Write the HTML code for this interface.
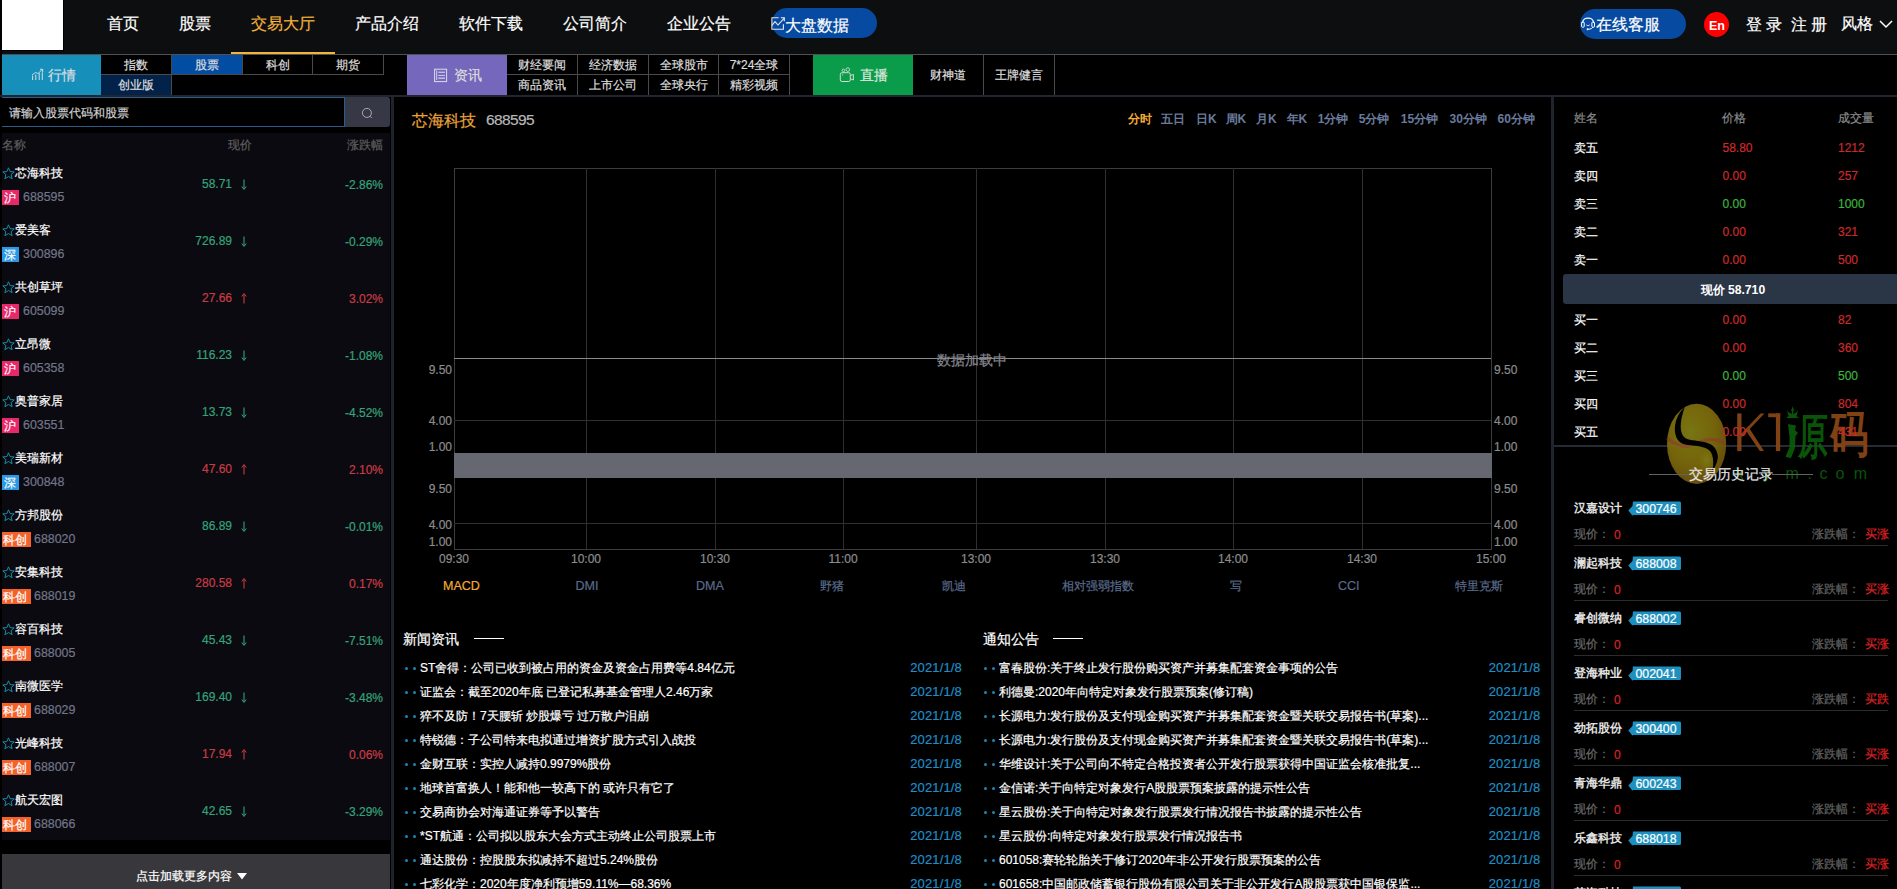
<!DOCTYPE html>
<html><head><meta charset="utf-8"><title>交易大厅</title>
<style>
html,body{margin:0;padding:0;}
body{width:1897px;height:889px;overflow:hidden;background:#000;position:relative;font-family:"Liberation Sans",sans-serif;}
.t{position:absolute;white-space:nowrap;-webkit-text-stroke-width:0.2px;}
.r{position:absolute;}
svg{position:absolute;}
</style></head><body>

<div class="r" style="left:2px;top:0px;width:1895px;height:54px;background:#0d0e10;"></div>
<div class="r" style="left:2px;top:54px;width:1895px;height:1px;background:#505050;"></div>
<div class="r" style="left:2px;top:0px;width:62px;height:51px;background:#000;"></div>
<div class="r" style="left:2px;top:0px;width:61px;height:50px;background:#fff;"></div>
<div class="t " style="left:107.1px;top:16px;font-size:16px;line-height:16px;color:#fff;">首页</div>
<div class="t " style="left:178.5px;top:16px;font-size:16px;line-height:16px;color:#fff;">股票</div>
<div class="t " style="left:250.5px;top:16px;font-size:16px;line-height:16px;color:#f3b33d;">交易大厅</div>
<div class="t " style="left:354.5px;top:16px;font-size:16px;line-height:16px;color:#fff;">产品介绍</div>
<div class="t " style="left:458.5px;top:16px;font-size:16px;line-height:16px;color:#fff;">软件下载</div>
<div class="t " style="left:562.5px;top:16px;font-size:16px;line-height:16px;color:#fff;">公司简介</div>
<div class="t " style="left:666.5px;top:16px;font-size:16px;line-height:16px;color:#fff;">企业公告</div>
<div class="r" style="left:231px;top:52px;width:104px;height:2px;background:#f3b33d;"></div>
<div class="r" style="left:772px;top:8px;width:105px;height:30px;background:#064aa2;border-radius:15px;"></div>
<svg style="left:766px;top:10px" width="20" height="24" viewBox="766 10 20 24"><path d="M778.6 17.7 H771.9 V29.2 H783.4 V24.2" fill="none" stroke="#e6e9f2" stroke-width="1.1"/><path d="M771.9 25.5 L775 21.6 L778 25 L784.3 18.2" fill="none" stroke="#e6e9f2" stroke-width="1.1"/><path d="M780.8 17.7 H784.3 V21.3" fill="none" stroke="#e6e9f2" stroke-width="1.1"/></svg>
<div class="t " style="left:785px;top:18px;font-size:16px;line-height:16px;color:#fff;">大盘数据</div>
<div class="r" style="left:1580px;top:9px;width:106px;height:30px;background:#064aa2;border-radius:15px;"></div>
<svg style="left:1575px;top:10px" width="24" height="24" viewBox="1575 10 24 24"><path d="M1582.6 23 C1582.6 16.5 1593.6 16.5 1593.6 23" fill="none" stroke="#fff" stroke-width="1.2"/><rect x="1581.6" y="22" width="2.6" height="5.2" rx="0.8" fill="none" stroke="#fff" stroke-width="1"/><rect x="1591.9" y="22" width="2.6" height="5.2" rx="0.8" fill="none" stroke="#fff" stroke-width="1"/><path d="M1586.3 24.8 Q1588 27 1589.8 24.8" fill="none" stroke="#eee" stroke-width="0.9"/><path d="M1593 27 Q1592 29.3 1588.2 29.3" fill="none" stroke="#fff" stroke-width="1"/><circle cx="1587.6" cy="29.2" r="1" fill="#fff"/></svg>
<div class="t " style="left:1596px;top:17px;font-size:16px;line-height:16px;color:#fff;">在线客服</div>
<div class="r" style="left:1704px;top:12px;width:25px;height:25px;background:#f00;border-radius:50%;"></div>
<div class="t " style="left:1709px;top:19.5px;font-size:12.5px;line-height:12.5px;color:#fff;font-weight:bold;-webkit-text-stroke-width:0;">En</div>
<div class="t " style="left:1746px;top:17px;font-size:16px;line-height:16px;color:#fff;">登 录</div>
<div class="t " style="left:1790.5px;top:17px;font-size:16px;line-height:16px;color:#fff;">注 册</div>
<div class="t " style="left:1841px;top:16px;font-size:16px;line-height:16px;color:#fff;">风格</div>
<svg style="left:1879px;top:19px" width="14" height="10" viewBox="0 0 14 10"><path d="M1 2 L7 8 L13 2" fill="none" stroke="#fff" stroke-width="1.5"/></svg>
<div class="r" style="left:0px;top:55px;width:1897px;height:40px;background:#000;"></div>
<div class="r" style="left:2px;top:55px;width:99px;height:40px;background:#1690bb;"></div>
<svg style="left:25px;top:62px" width="22" height="22" viewBox="25 62 22 22"><path d="M32.6 80 V75.6 M35.8 80 V74.5 M39.2 80 V73 M42.3 80 V72.3" stroke="#d4dde4" stroke-width="1" fill="none"/><path d="M32 75 L35.5 72.5 L38 73.5 L42.6 69.3" stroke="#d4dde4" stroke-width="0.9" fill="none"/><path d="M40 69.3 H42.7 V72" stroke="#d4dde4" stroke-width="1" fill="none"/></svg>
<div class="t " style="left:47.5px;top:68px;font-size:14px;line-height:14px;color:#d8dde2;">行情</div>
<div class="r" style="left:101px;top:55px;width:71px;height:20px;background:#000;box-sizing:border-box;border-right:1px solid #4a4a4a;border-bottom:1px solid #4a4a4a;"></div>
<div class="t" style="left:100.5px;width:71px;text-align:center;top:59px;font-size:12px;line-height:12px;color:#ddd;">指数</div>
<div class="r" style="left:172px;top:55px;width:71px;height:20px;background:#024ca2;box-sizing:border-box;border-right:1px solid #4a4a4a;border-bottom:1px solid #4a4a4a;"></div>
<div class="t" style="left:171.5px;width:71px;text-align:center;top:59px;font-size:12px;line-height:12px;color:#ddd;">股票</div>
<div class="r" style="left:243px;top:55px;width:70px;height:20px;background:#000;box-sizing:border-box;border-right:1px solid #4a4a4a;border-bottom:1px solid #4a4a4a;"></div>
<div class="t" style="left:242.5px;width:70px;text-align:center;top:59px;font-size:12px;line-height:12px;color:#ddd;">科创</div>
<div class="r" style="left:313px;top:55px;width:71px;height:20px;background:#000;box-sizing:border-box;border-right:1px solid #4a4a4a;border-bottom:1px solid #4a4a4a;"></div>
<div class="t" style="left:312.5px;width:71px;text-align:center;top:59px;font-size:12px;line-height:12px;color:#ddd;">期货</div>
<div class="r" style="left:101px;top:75px;width:71px;height:20px;background:#02224a;box-sizing:border-box;border-right:1px solid #4a4a4a;"></div>
<div class="t" style="left:100.5px;width:71px;text-align:center;top:79px;font-size:12px;line-height:12px;color:#ddd;">创业版</div>
<div class="r" style="left:407px;top:55px;width:100px;height:40px;background:#7567bb;"></div>
<svg style="left:425px;top:62px" width="26" height="24" viewBox="425 62 26 24"><rect x="434.6" y="69.2" width="12" height="12.4" fill="none" stroke="#dcdcf0" stroke-width="1"/><path d="M436.7 70.5 V80" stroke="#dcdcf0" stroke-width="0.9"/><path d="M438.3 72.3 H445" stroke="#c8c4e6" stroke-width="1.3"/><path d="M438.3 75.4 H445" stroke="#dcdcf0" stroke-width="0.9"/><path d="M438.3 78.2 H445" stroke="#c8c4e6" stroke-width="1.4"/></svg>
<div class="t " style="left:453.5px;top:68px;font-size:14px;line-height:14px;color:#dedede;">资讯</div>
<div class="r" style="left:507px;top:55px;width:71px;height:20px;background:#000;box-sizing:border-box;border-right:1px solid #4a4a4a;border-bottom:1px solid #4a4a4a;"></div>
<div class="t" style="left:506.5px;width:71px;text-align:center;top:59px;font-size:12px;line-height:12px;color:#ddd;">财经要闻</div>
<div class="r" style="left:507px;top:75px;width:71px;height:20px;background:#000;box-sizing:border-box;border-right:1px solid #4a4a4a;"></div>
<div class="t" style="left:506.5px;width:71px;text-align:center;top:79px;font-size:12px;line-height:12px;color:#ddd;">商品资讯</div>
<div class="r" style="left:578px;top:55px;width:71px;height:20px;background:#000;box-sizing:border-box;border-right:1px solid #4a4a4a;border-bottom:1px solid #4a4a4a;"></div>
<div class="t" style="left:577.5px;width:71px;text-align:center;top:59px;font-size:12px;line-height:12px;color:#ddd;">经济数据</div>
<div class="r" style="left:578px;top:75px;width:71px;height:20px;background:#000;box-sizing:border-box;border-right:1px solid #4a4a4a;"></div>
<div class="t" style="left:577.5px;width:71px;text-align:center;top:79px;font-size:12px;line-height:12px;color:#ddd;">上市公司</div>
<div class="r" style="left:649px;top:55px;width:70px;height:20px;background:#000;box-sizing:border-box;border-right:1px solid #4a4a4a;border-bottom:1px solid #4a4a4a;"></div>
<div class="t" style="left:648.5px;width:70px;text-align:center;top:59px;font-size:12px;line-height:12px;color:#ddd;">全球股市</div>
<div class="r" style="left:649px;top:75px;width:70px;height:20px;background:#000;box-sizing:border-box;border-right:1px solid #4a4a4a;"></div>
<div class="t" style="left:648.5px;width:70px;text-align:center;top:79px;font-size:12px;line-height:12px;color:#ddd;">全球央行</div>
<div class="r" style="left:719px;top:55px;width:71px;height:20px;background:#000;box-sizing:border-box;border-right:1px solid #4a4a4a;border-bottom:1px solid #4a4a4a;"></div>
<div class="t" style="left:718.5px;width:71px;text-align:center;top:59px;font-size:12px;line-height:12px;color:#ddd;">7*24全球</div>
<div class="r" style="left:719px;top:75px;width:71px;height:20px;background:#000;box-sizing:border-box;border-right:1px solid #4a4a4a;"></div>
<div class="t" style="left:718.5px;width:71px;text-align:center;top:79px;font-size:12px;line-height:12px;color:#ddd;">精彩视频</div>
<div class="r" style="left:813px;top:55px;width:100px;height:40px;background:#0b9c4b;"></div>
<svg style="left:835px;top:64px" width="24" height="22" viewBox="835 64 24 22"><rect x="840.3" y="72.7" width="10" height="8.8" rx="1.6" fill="none" stroke="#d2dcd2" stroke-width="1"/><path d="M850.3 75.6 L853.4 74.4 V80 L850.3 78.8" fill="none" stroke="#d2dcd2" stroke-width="1"/><circle cx="843.4" cy="70.4" r="1.3" fill="none" stroke="#d2dcd2" stroke-width="0.9"/><circle cx="847.8" cy="69.6" r="1.8" fill="none" stroke="#d2dcd2" stroke-width="0.9"/><circle cx="842.6" cy="74.8" r="0.6" fill="#d2dcd2"/></svg>
<div class="t " style="left:859.5px;top:68px;font-size:14px;line-height:14px;color:#dde6de;">直播</div>
<div class="r" style="left:913px;top:55px;width:71px;height:40px;background:#000;box-sizing:border-box;border-right:1px solid #4a4a4a;"></div>
<div class="t" style="left:912.5px;width:71px;text-align:center;top:69px;font-size:12px;line-height:12px;color:#ddd;">财神道</div>
<div class="r" style="left:984px;top:55px;width:71px;height:40px;background:#000;box-sizing:border-box;border-right:1px solid #4a4a4a;"></div>
<div class="t" style="left:983.5px;width:71px;text-align:center;top:69px;font-size:12px;line-height:12px;color:#ddd;">王牌健言</div>
<div class="r" style="left:0px;top:95px;width:1897px;height:2px;background:#20252f;"></div>
<div class="r" style="left:2px;top:97px;width:343px;height:30px;box-sizing:border-box;border:1px solid #2b5d8a;border-left:none;background:#000"></div>
<div class="t " style="left:9px;top:107px;font-size:12px;line-height:12px;color:#d0d0d0;">请输入股票代码和股票</div>
<div class="r" style="left:345px;top:97px;width:45px;height:30px;background:#363845;border-radius:0 3px 3px 0;"></div>
<svg style="left:358px;top:104px" width="18" height="18" viewBox="358 104 18 18"><circle cx="366.9" cy="112.9" r="4.5" fill="none" stroke="#b4b6bc" stroke-width="0.9"/><path d="M370 116.2 L371.8 118" stroke="#b4b6bc" stroke-width="0.9"/></svg>
<div class="r" style="left:391px;top:97px;width:3px;height:792px;background:#1e232c;"></div>
<div class="r" style="left:2px;top:133px;width:388px;height:707px;background:#0b0a10;"></div>
<div class="t " style="left:2px;top:139px;font-size:12px;line-height:12px;color:#5e5e5e;">名称</div>
<div class="t " style="left:228px;top:139px;font-size:12px;line-height:12px;color:#5e5e5e;">现价</div>
<div class="t " style="left:347px;top:139px;font-size:12px;line-height:12px;color:#5e5e5e;">涨跌幅</div>
<svg style="left:2px;top:167px" width="13" height="13" viewBox="0 0 13 13"><path d="M6.5 0.8 L8.1 4.6 L12.2 4.9 L9.1 7.6 L10.1 11.7 L6.5 9.5 L2.9 11.7 L3.9 7.6 L0.8 4.9 L4.9 4.6 Z" fill="none" stroke="#1c90a8" stroke-width="0.95" stroke-linejoin="round"/></svg>
<div class="t " style="left:15px;top:167px;font-size:12px;line-height:12px;color:#fff;">芯海科技</div>
<div class="r" style="left:2px;top:190px;width:17px;height:15px;background:#e8286a;"></div>
<div class="t " style="left:4px;top:192px;font-size:12px;line-height:12px;color:#fff;">沪</div>
<div class="t " style="left:23px;top:191px;font-size:12.4px;line-height:12.4px;color:#72768a;">688595</div>
<div class="t" style="right:1665px;top:178px;font-size:12px;line-height:12px;color:#35a27a;">58.71</div>
<svg style="left:241px;top:179px" width="6" height="11" viewBox="0 0 6 11"><path d="M3 0.5V9.5" stroke="#35a27a" stroke-width="1.1"/><path d="M0.8 7.5 L3 10.5 L5.2 7.5" fill="none" stroke="#35a27a" stroke-width="1"/></svg>
<div class="t" style="right:1514px;top:179px;font-size:12px;line-height:12px;color:#35a27a;">-2.86%</div>
<svg style="left:2px;top:224px" width="13" height="13" viewBox="0 0 13 13"><path d="M6.5 0.8 L8.1 4.6 L12.2 4.9 L9.1 7.6 L10.1 11.7 L6.5 9.5 L2.9 11.7 L3.9 7.6 L0.8 4.9 L4.9 4.6 Z" fill="none" stroke="#1c90a8" stroke-width="0.95" stroke-linejoin="round"/></svg>
<div class="t " style="left:15px;top:224px;font-size:12px;line-height:12px;color:#fff;">爱美客</div>
<div class="r" style="left:2px;top:247px;width:17px;height:15px;background:#2b98e6;"></div>
<div class="t " style="left:4px;top:249px;font-size:12px;line-height:12px;color:#fff;">深</div>
<div class="t " style="left:23px;top:248px;font-size:12.4px;line-height:12.4px;color:#72768a;">300896</div>
<div class="t" style="right:1665px;top:235px;font-size:12px;line-height:12px;color:#35a27a;">726.89</div>
<svg style="left:241px;top:236px" width="6" height="11" viewBox="0 0 6 11"><path d="M3 0.5V9.5" stroke="#35a27a" stroke-width="1.1"/><path d="M0.8 7.5 L3 10.5 L5.2 7.5" fill="none" stroke="#35a27a" stroke-width="1"/></svg>
<div class="t" style="right:1514px;top:236px;font-size:12px;line-height:12px;color:#35a27a;">-0.29%</div>
<svg style="left:2px;top:281px" width="13" height="13" viewBox="0 0 13 13"><path d="M6.5 0.8 L8.1 4.6 L12.2 4.9 L9.1 7.6 L10.1 11.7 L6.5 9.5 L2.9 11.7 L3.9 7.6 L0.8 4.9 L4.9 4.6 Z" fill="none" stroke="#1c90a8" stroke-width="0.95" stroke-linejoin="round"/></svg>
<div class="t " style="left:15px;top:281px;font-size:12px;line-height:12px;color:#fff;">共创草坪</div>
<div class="r" style="left:2px;top:304px;width:17px;height:15px;background:#e8286a;"></div>
<div class="t " style="left:4px;top:306px;font-size:12px;line-height:12px;color:#fff;">沪</div>
<div class="t " style="left:23px;top:305px;font-size:12.4px;line-height:12.4px;color:#72768a;">605099</div>
<div class="t" style="right:1665px;top:292px;font-size:12px;line-height:12px;color:#c83c46;">27.66</div>
<svg style="left:241px;top:293px" width="6" height="11" viewBox="0 0 6 11"><path d="M3 10.5V1.5" stroke="#c83c46" stroke-width="1.1"/><path d="M0.8 3.5 L3 0.5 L5.2 3.5" fill="none" stroke="#c83c46" stroke-width="1"/></svg>
<div class="t" style="right:1514px;top:293px;font-size:12px;line-height:12px;color:#c83c46;">3.02%</div>
<svg style="left:2px;top:338px" width="13" height="13" viewBox="0 0 13 13"><path d="M6.5 0.8 L8.1 4.6 L12.2 4.9 L9.1 7.6 L10.1 11.7 L6.5 9.5 L2.9 11.7 L3.9 7.6 L0.8 4.9 L4.9 4.6 Z" fill="none" stroke="#1c90a8" stroke-width="0.95" stroke-linejoin="round"/></svg>
<div class="t " style="left:15px;top:338px;font-size:12px;line-height:12px;color:#fff;">立昂微</div>
<div class="r" style="left:2px;top:361px;width:17px;height:15px;background:#e8286a;"></div>
<div class="t " style="left:4px;top:363px;font-size:12px;line-height:12px;color:#fff;">沪</div>
<div class="t " style="left:23px;top:362px;font-size:12.4px;line-height:12.4px;color:#72768a;">605358</div>
<div class="t" style="right:1665px;top:349px;font-size:12px;line-height:12px;color:#35a27a;">116.23</div>
<svg style="left:241px;top:350px" width="6" height="11" viewBox="0 0 6 11"><path d="M3 0.5V9.5" stroke="#35a27a" stroke-width="1.1"/><path d="M0.8 7.5 L3 10.5 L5.2 7.5" fill="none" stroke="#35a27a" stroke-width="1"/></svg>
<div class="t" style="right:1514px;top:350px;font-size:12px;line-height:12px;color:#35a27a;">-1.08%</div>
<svg style="left:2px;top:395px" width="13" height="13" viewBox="0 0 13 13"><path d="M6.5 0.8 L8.1 4.6 L12.2 4.9 L9.1 7.6 L10.1 11.7 L6.5 9.5 L2.9 11.7 L3.9 7.6 L0.8 4.9 L4.9 4.6 Z" fill="none" stroke="#1c90a8" stroke-width="0.95" stroke-linejoin="round"/></svg>
<div class="t " style="left:15px;top:395px;font-size:12px;line-height:12px;color:#fff;">奥普家居</div>
<div class="r" style="left:2px;top:418px;width:17px;height:15px;background:#e8286a;"></div>
<div class="t " style="left:4px;top:420px;font-size:12px;line-height:12px;color:#fff;">沪</div>
<div class="t " style="left:23px;top:419px;font-size:12.4px;line-height:12.4px;color:#72768a;">603551</div>
<div class="t" style="right:1665px;top:406px;font-size:12px;line-height:12px;color:#35a27a;">13.73</div>
<svg style="left:241px;top:407px" width="6" height="11" viewBox="0 0 6 11"><path d="M3 0.5V9.5" stroke="#35a27a" stroke-width="1.1"/><path d="M0.8 7.5 L3 10.5 L5.2 7.5" fill="none" stroke="#35a27a" stroke-width="1"/></svg>
<div class="t" style="right:1514px;top:407px;font-size:12px;line-height:12px;color:#35a27a;">-4.52%</div>
<svg style="left:2px;top:452px" width="13" height="13" viewBox="0 0 13 13"><path d="M6.5 0.8 L8.1 4.6 L12.2 4.9 L9.1 7.6 L10.1 11.7 L6.5 9.5 L2.9 11.7 L3.9 7.6 L0.8 4.9 L4.9 4.6 Z" fill="none" stroke="#1c90a8" stroke-width="0.95" stroke-linejoin="round"/></svg>
<div class="t " style="left:15px;top:452px;font-size:12px;line-height:12px;color:#fff;">美瑞新材</div>
<div class="r" style="left:2px;top:475px;width:17px;height:15px;background:#2b98e6;"></div>
<div class="t " style="left:4px;top:477px;font-size:12px;line-height:12px;color:#fff;">深</div>
<div class="t " style="left:23px;top:476px;font-size:12.4px;line-height:12.4px;color:#72768a;">300848</div>
<div class="t" style="right:1665px;top:463px;font-size:12px;line-height:12px;color:#c83c46;">47.60</div>
<svg style="left:241px;top:464px" width="6" height="11" viewBox="0 0 6 11"><path d="M3 10.5V1.5" stroke="#c83c46" stroke-width="1.1"/><path d="M0.8 3.5 L3 0.5 L5.2 3.5" fill="none" stroke="#c83c46" stroke-width="1"/></svg>
<div class="t" style="right:1514px;top:464px;font-size:12px;line-height:12px;color:#c83c46;">2.10%</div>
<svg style="left:2px;top:509px" width="13" height="13" viewBox="0 0 13 13"><path d="M6.5 0.8 L8.1 4.6 L12.2 4.9 L9.1 7.6 L10.1 11.7 L6.5 9.5 L2.9 11.7 L3.9 7.6 L0.8 4.9 L4.9 4.6 Z" fill="none" stroke="#1c90a8" stroke-width="0.95" stroke-linejoin="round"/></svg>
<div class="t " style="left:15px;top:509px;font-size:12px;line-height:12px;color:#fff;">方邦股份</div>
<div class="r" style="left:2px;top:532px;width:29px;height:15px;background:#f4622c;"></div>
<div class="t " style="left:3px;top:534px;font-size:12px;line-height:12px;color:#fff;">科创</div>
<div class="t " style="left:34px;top:533px;font-size:12.4px;line-height:12.4px;color:#72768a;">688020</div>
<div class="t" style="right:1665px;top:520px;font-size:12px;line-height:12px;color:#35a27a;">86.89</div>
<svg style="left:241px;top:521px" width="6" height="11" viewBox="0 0 6 11"><path d="M3 0.5V9.5" stroke="#35a27a" stroke-width="1.1"/><path d="M0.8 7.5 L3 10.5 L5.2 7.5" fill="none" stroke="#35a27a" stroke-width="1"/></svg>
<div class="t" style="right:1514px;top:521px;font-size:12px;line-height:12px;color:#35a27a;">-0.01%</div>
<svg style="left:2px;top:566px" width="13" height="13" viewBox="0 0 13 13"><path d="M6.5 0.8 L8.1 4.6 L12.2 4.9 L9.1 7.6 L10.1 11.7 L6.5 9.5 L2.9 11.7 L3.9 7.6 L0.8 4.9 L4.9 4.6 Z" fill="none" stroke="#1c90a8" stroke-width="0.95" stroke-linejoin="round"/></svg>
<div class="t " style="left:15px;top:566px;font-size:12px;line-height:12px;color:#fff;">安集科技</div>
<div class="r" style="left:2px;top:589px;width:29px;height:15px;background:#f4622c;"></div>
<div class="t " style="left:3px;top:591px;font-size:12px;line-height:12px;color:#fff;">科创</div>
<div class="t " style="left:34px;top:590px;font-size:12.4px;line-height:12.4px;color:#72768a;">688019</div>
<div class="t" style="right:1665px;top:577px;font-size:12px;line-height:12px;color:#c83c46;">280.58</div>
<svg style="left:241px;top:578px" width="6" height="11" viewBox="0 0 6 11"><path d="M3 10.5V1.5" stroke="#c83c46" stroke-width="1.1"/><path d="M0.8 3.5 L3 0.5 L5.2 3.5" fill="none" stroke="#c83c46" stroke-width="1"/></svg>
<div class="t" style="right:1514px;top:578px;font-size:12px;line-height:12px;color:#c83c46;">0.17%</div>
<svg style="left:2px;top:623px" width="13" height="13" viewBox="0 0 13 13"><path d="M6.5 0.8 L8.1 4.6 L12.2 4.9 L9.1 7.6 L10.1 11.7 L6.5 9.5 L2.9 11.7 L3.9 7.6 L0.8 4.9 L4.9 4.6 Z" fill="none" stroke="#1c90a8" stroke-width="0.95" stroke-linejoin="round"/></svg>
<div class="t " style="left:15px;top:623px;font-size:12px;line-height:12px;color:#fff;">容百科技</div>
<div class="r" style="left:2px;top:646px;width:29px;height:15px;background:#f4622c;"></div>
<div class="t " style="left:3px;top:648px;font-size:12px;line-height:12px;color:#fff;">科创</div>
<div class="t " style="left:34px;top:647px;font-size:12.4px;line-height:12.4px;color:#72768a;">688005</div>
<div class="t" style="right:1665px;top:634px;font-size:12px;line-height:12px;color:#35a27a;">45.43</div>
<svg style="left:241px;top:635px" width="6" height="11" viewBox="0 0 6 11"><path d="M3 0.5V9.5" stroke="#35a27a" stroke-width="1.1"/><path d="M0.8 7.5 L3 10.5 L5.2 7.5" fill="none" stroke="#35a27a" stroke-width="1"/></svg>
<div class="t" style="right:1514px;top:635px;font-size:12px;line-height:12px;color:#35a27a;">-7.51%</div>
<svg style="left:2px;top:680px" width="13" height="13" viewBox="0 0 13 13"><path d="M6.5 0.8 L8.1 4.6 L12.2 4.9 L9.1 7.6 L10.1 11.7 L6.5 9.5 L2.9 11.7 L3.9 7.6 L0.8 4.9 L4.9 4.6 Z" fill="none" stroke="#1c90a8" stroke-width="0.95" stroke-linejoin="round"/></svg>
<div class="t " style="left:15px;top:680px;font-size:12px;line-height:12px;color:#fff;">南微医学</div>
<div class="r" style="left:2px;top:703px;width:29px;height:15px;background:#f4622c;"></div>
<div class="t " style="left:3px;top:705px;font-size:12px;line-height:12px;color:#fff;">科创</div>
<div class="t " style="left:34px;top:704px;font-size:12.4px;line-height:12.4px;color:#72768a;">688029</div>
<div class="t" style="right:1665px;top:691px;font-size:12px;line-height:12px;color:#35a27a;">169.40</div>
<svg style="left:241px;top:692px" width="6" height="11" viewBox="0 0 6 11"><path d="M3 0.5V9.5" stroke="#35a27a" stroke-width="1.1"/><path d="M0.8 7.5 L3 10.5 L5.2 7.5" fill="none" stroke="#35a27a" stroke-width="1"/></svg>
<div class="t" style="right:1514px;top:692px;font-size:12px;line-height:12px;color:#35a27a;">-3.48%</div>
<svg style="left:2px;top:737px" width="13" height="13" viewBox="0 0 13 13"><path d="M6.5 0.8 L8.1 4.6 L12.2 4.9 L9.1 7.6 L10.1 11.7 L6.5 9.5 L2.9 11.7 L3.9 7.6 L0.8 4.9 L4.9 4.6 Z" fill="none" stroke="#1c90a8" stroke-width="0.95" stroke-linejoin="round"/></svg>
<div class="t " style="left:15px;top:737px;font-size:12px;line-height:12px;color:#fff;">光峰科技</div>
<div class="r" style="left:2px;top:760px;width:29px;height:15px;background:#f4622c;"></div>
<div class="t " style="left:3px;top:762px;font-size:12px;line-height:12px;color:#fff;">科创</div>
<div class="t " style="left:34px;top:761px;font-size:12.4px;line-height:12.4px;color:#72768a;">688007</div>
<div class="t" style="right:1665px;top:748px;font-size:12px;line-height:12px;color:#c83c46;">17.94</div>
<svg style="left:241px;top:749px" width="6" height="11" viewBox="0 0 6 11"><path d="M3 10.5V1.5" stroke="#c83c46" stroke-width="1.1"/><path d="M0.8 3.5 L3 0.5 L5.2 3.5" fill="none" stroke="#c83c46" stroke-width="1"/></svg>
<div class="t" style="right:1514px;top:749px;font-size:12px;line-height:12px;color:#c83c46;">0.06%</div>
<svg style="left:2px;top:794px" width="13" height="13" viewBox="0 0 13 13"><path d="M6.5 0.8 L8.1 4.6 L12.2 4.9 L9.1 7.6 L10.1 11.7 L6.5 9.5 L2.9 11.7 L3.9 7.6 L0.8 4.9 L4.9 4.6 Z" fill="none" stroke="#1c90a8" stroke-width="0.95" stroke-linejoin="round"/></svg>
<div class="t " style="left:15px;top:794px;font-size:12px;line-height:12px;color:#fff;">航天宏图</div>
<div class="r" style="left:2px;top:817px;width:29px;height:15px;background:#f4622c;"></div>
<div class="t " style="left:3px;top:819px;font-size:12px;line-height:12px;color:#fff;">科创</div>
<div class="t " style="left:34px;top:818px;font-size:12.4px;line-height:12.4px;color:#72768a;">688066</div>
<div class="t" style="right:1665px;top:805px;font-size:12px;line-height:12px;color:#35a27a;">42.65</div>
<svg style="left:241px;top:806px" width="6" height="11" viewBox="0 0 6 11"><path d="M3 0.5V9.5" stroke="#35a27a" stroke-width="1.1"/><path d="M0.8 7.5 L3 10.5 L5.2 7.5" fill="none" stroke="#35a27a" stroke-width="1"/></svg>
<div class="t" style="right:1514px;top:806px;font-size:12px;line-height:12px;color:#35a27a;">-3.29%</div>
<div class="r" style="left:2px;top:854px;width:388px;height:35px;background:#38383c;"></div>
<div class="t " style="left:136px;top:870px;font-size:12px;line-height:12px;color:#fff;">点击加载更多内容</div>
<svg style="left:237px;top:873px" width="10" height="7" viewBox="0 0 10 7"><path d="M0 0 H10 L5 6.5 Z" fill="#fff"/></svg>
<div class="t " style="left:412px;top:112.5px;font-size:16px;line-height:16px;color:#eaa43a;">芯海科技</div>
<div class="t " style="left:486px;top:112px;font-size:15.5px;line-height:15.5px;color:#b8b8b8;letter-spacing:-0.6px;">688595</div>
<div class="t " style="left:1127.5px;top:113px;font-size:12px;line-height:12px;color:#f2ac35;font-weight:bold;-webkit-text-stroke-width:0;">分时</div>
<div class="t " style="left:1161px;top:113px;font-size:12px;line-height:12px;color:#6a7a9c;font-weight:bold;-webkit-text-stroke-width:0;">五日</div>
<div class="t " style="left:1196px;top:113px;font-size:12px;line-height:12px;color:#6a7a9c;font-weight:bold;-webkit-text-stroke-width:0;">日K</div>
<div class="t " style="left:1225.6px;top:113px;font-size:12px;line-height:12px;color:#6a7a9c;font-weight:bold;-webkit-text-stroke-width:0;">周K</div>
<div class="t " style="left:1256px;top:113px;font-size:12px;line-height:12px;color:#6a7a9c;font-weight:bold;-webkit-text-stroke-width:0;">月K</div>
<div class="t " style="left:1286.5px;top:113px;font-size:12px;line-height:12px;color:#6a7a9c;font-weight:bold;-webkit-text-stroke-width:0;">年K</div>
<div class="t " style="left:1317.8px;top:113px;font-size:12px;line-height:12px;color:#6a7a9c;font-weight:bold;-webkit-text-stroke-width:0;">1分钟</div>
<div class="t " style="left:1358.8px;top:113px;font-size:12px;line-height:12px;color:#6a7a9c;font-weight:bold;-webkit-text-stroke-width:0;">5分钟</div>
<div class="t " style="left:1400.8px;top:113px;font-size:12px;line-height:12px;color:#6a7a9c;font-weight:bold;-webkit-text-stroke-width:0;">15分钟</div>
<div class="t " style="left:1449.5px;top:113px;font-size:12px;line-height:12px;color:#6a7a9c;font-weight:bold;-webkit-text-stroke-width:0;">30分钟</div>
<div class="t " style="left:1497.6px;top:113px;font-size:12px;line-height:12px;color:#6a7a9c;font-weight:bold;-webkit-text-stroke-width:0;">60分钟</div>
<div class="r" style="left:454px;top:168px;width:1038px;height:382px;box-sizing:border-box;border:1px solid #3c3c3c"></div>
<div class="r" style="left:586px;top:168px;width:1px;height:381px;background:#2e2e2e;"></div>
<div class="r" style="left:715px;top:168px;width:1px;height:381px;background:#2e2e2e;"></div>
<div class="r" style="left:843px;top:168px;width:1px;height:381px;background:#2e2e2e;"></div>
<div class="r" style="left:976px;top:168px;width:1px;height:381px;background:#2e2e2e;"></div>
<div class="r" style="left:1105px;top:168px;width:1px;height:381px;background:#2e2e2e;"></div>
<div class="r" style="left:1233px;top:168px;width:1px;height:381px;background:#2e2e2e;"></div>
<div class="r" style="left:1362px;top:168px;width:1px;height:381px;background:#2e2e2e;"></div>
<div class="r" style="left:454px;top:358px;width:1037px;height:1px;background:#8a8a8a;"></div>
<div class="r" style="left:454px;top:420px;width:1037px;height:1px;background:#303030;"></div>
<div class="r" style="left:454px;top:523px;width:1037px;height:1px;background:#303030;"></div>
<div class="r" style="left:454px;top:453px;width:1038px;height:25px;background:#656871;"></div>
<div class="t" style="right:1445px;top:364px;font-size:12px;line-height:12px;color:#8c8c8c;">9.50</div>
<div class="t " style="left:1494px;top:364px;font-size:12px;line-height:12px;color:#8c8c8c;">9.50</div>
<div class="t" style="right:1445px;top:415px;font-size:12px;line-height:12px;color:#8c8c8c;">4.00</div>
<div class="t " style="left:1494px;top:415px;font-size:12px;line-height:12px;color:#8c8c8c;">4.00</div>
<div class="t" style="right:1445px;top:441px;font-size:12px;line-height:12px;color:#8c8c8c;">1.00</div>
<div class="t " style="left:1494px;top:441px;font-size:12px;line-height:12px;color:#8c8c8c;">1.00</div>
<div class="t" style="right:1445px;top:483px;font-size:12px;line-height:12px;color:#8c8c8c;">9.50</div>
<div class="t " style="left:1494px;top:483px;font-size:12px;line-height:12px;color:#8c8c8c;">9.50</div>
<div class="t" style="right:1445px;top:519px;font-size:12px;line-height:12px;color:#8c8c8c;">4.00</div>
<div class="t " style="left:1494px;top:519px;font-size:12px;line-height:12px;color:#8c8c8c;">4.00</div>
<div class="t" style="right:1445px;top:536px;font-size:12px;line-height:12px;color:#8c8c8c;">1.00</div>
<div class="t " style="left:1494px;top:536px;font-size:12px;line-height:12px;color:#8c8c8c;">1.00</div>
<div class="t" style="left:424.0px;width:60px;text-align:center;top:553px;font-size:12px;line-height:12px;color:#8c8c8c;">09:30</div>
<div class="t" style="left:556.0px;width:60px;text-align:center;top:553px;font-size:12px;line-height:12px;color:#8c8c8c;">10:00</div>
<div class="t" style="left:685.0px;width:60px;text-align:center;top:553px;font-size:12px;line-height:12px;color:#8c8c8c;">10:30</div>
<div class="t" style="left:813.0px;width:60px;text-align:center;top:553px;font-size:12px;line-height:12px;color:#8c8c8c;">11:00</div>
<div class="t" style="left:946.0px;width:60px;text-align:center;top:553px;font-size:12px;line-height:12px;color:#8c8c8c;">13:00</div>
<div class="t" style="left:1075.0px;width:60px;text-align:center;top:553px;font-size:12px;line-height:12px;color:#8c8c8c;">13:30</div>
<div class="t" style="left:1203.0px;width:60px;text-align:center;top:553px;font-size:12px;line-height:12px;color:#8c8c8c;">14:00</div>
<div class="t" style="left:1332.0px;width:60px;text-align:center;top:553px;font-size:12px;line-height:12px;color:#8c8c8c;">14:30</div>
<div class="t" style="left:1461.0px;width:60px;text-align:center;top:553px;font-size:12px;line-height:12px;color:#8c8c8c;">15:00</div>
<div class="t " style="left:937px;top:352.5px;font-size:14px;line-height:14px;color:#85868e;">数据加载中</div>
<div class="t " style="left:443px;top:579.5px;font-size:12.5px;line-height:12.5px;color:#f2ac35;">MACD</div>
<div class="t " style="left:575.5px;top:579.5px;font-size:12.5px;line-height:12.5px;color:#5b6b8c;">DMI</div>
<div class="t " style="left:696px;top:579.5px;font-size:12.5px;line-height:12.5px;color:#5b6b8c;">DMA</div>
<div class="t " style="left:820px;top:580px;font-size:12px;line-height:12px;color:#5b6b8c;">野猪</div>
<div class="t " style="left:942px;top:580px;font-size:12px;line-height:12px;color:#5b6b8c;">凯迪</div>
<div class="t " style="left:1062px;top:580px;font-size:12px;line-height:12px;color:#5b6b8c;">相对强弱指数</div>
<div class="t " style="left:1230px;top:580px;font-size:12px;line-height:12px;color:#5b6b8c;">写</div>
<div class="t " style="left:1338px;top:579.5px;font-size:12.5px;line-height:12.5px;color:#5b6b8c;">CCI</div>
<div class="t " style="left:1455px;top:580px;font-size:12px;line-height:12px;color:#5b6b8c;">特里克斯</div>
<div class="t " style="left:403px;top:632px;font-size:14px;line-height:14px;color:#fff;">新闻资讯</div>
<div class="r" style="left:474px;top:638px;width:30px;height:1px;background:#fff;"></div>
<div class="t " style="left:983px;top:632px;font-size:14px;line-height:14px;color:#fff;">通知公告</div>
<div class="r" style="left:1053px;top:638px;width:30px;height:1px;background:#fff;"></div>
<div class="r" style="left:405px;top:667px;width:3px;height:3px;background:#1a88b4;border-radius:50%;"></div>
<div class="r" style="left:413px;top:667px;width:3px;height:3px;background:#1a88b4;border-radius:50%;"></div>
<div class="t " style="left:420px;top:662px;font-size:12px;line-height:12px;color:#fff;">ST舍得：公司已收到被占用的资金及资金占用费等4.84亿元</div>
<div class="t" style="right:935px;top:661px;font-size:13px;line-height:13px;color:#1e8fc6;letter-spacing:0.15px;">2021/1/8</div>
<div class="r" style="left:984px;top:667px;width:3px;height:3px;background:#1a88b4;border-radius:50%;"></div>
<div class="r" style="left:992px;top:667px;width:3px;height:3px;background:#1a88b4;border-radius:50%;"></div>
<div class="t " style="left:999px;top:662px;font-size:12px;line-height:12px;color:#fff;">富春股份:关于终止发行股份购买资产并募集配套资金事项的公告</div>
<div class="t" style="right:356.5px;top:661px;font-size:13px;line-height:13px;color:#1e8fc6;letter-spacing:0.15px;">2021/1/8</div>
<div class="r" style="left:405px;top:691px;width:3px;height:3px;background:#1a88b4;border-radius:50%;"></div>
<div class="r" style="left:413px;top:691px;width:3px;height:3px;background:#1a88b4;border-radius:50%;"></div>
<div class="t " style="left:420px;top:686px;font-size:12px;line-height:12px;color:#fff;">证监会：截至2020年底 已登记私募基金管理人2.46万家</div>
<div class="t" style="right:935px;top:685px;font-size:13px;line-height:13px;color:#1e8fc6;letter-spacing:0.15px;">2021/1/8</div>
<div class="r" style="left:984px;top:691px;width:3px;height:3px;background:#1a88b4;border-radius:50%;"></div>
<div class="r" style="left:992px;top:691px;width:3px;height:3px;background:#1a88b4;border-radius:50%;"></div>
<div class="t " style="left:999px;top:686px;font-size:12px;line-height:12px;color:#fff;">利德曼:2020年向特定对象发行股票预案(修订稿)</div>
<div class="t" style="right:356.5px;top:685px;font-size:13px;line-height:13px;color:#1e8fc6;letter-spacing:0.15px;">2021/1/8</div>
<div class="r" style="left:405px;top:715px;width:3px;height:3px;background:#1a88b4;border-radius:50%;"></div>
<div class="r" style="left:413px;top:715px;width:3px;height:3px;background:#1a88b4;border-radius:50%;"></div>
<div class="t " style="left:420px;top:710px;font-size:12px;line-height:12px;color:#fff;">猝不及防！7天腰斩 炒股爆亏 过万散户泪崩</div>
<div class="t" style="right:935px;top:709px;font-size:13px;line-height:13px;color:#1e8fc6;letter-spacing:0.15px;">2021/1/8</div>
<div class="r" style="left:984px;top:715px;width:3px;height:3px;background:#1a88b4;border-radius:50%;"></div>
<div class="r" style="left:992px;top:715px;width:3px;height:3px;background:#1a88b4;border-radius:50%;"></div>
<div class="t " style="left:999px;top:710px;font-size:12px;line-height:12px;color:#fff;">长源电力:发行股份及支付现金购买资产并募集配套资金暨关联交易报告书(草案)...</div>
<div class="t" style="right:356.5px;top:709px;font-size:13px;line-height:13px;color:#1e8fc6;letter-spacing:0.15px;">2021/1/8</div>
<div class="r" style="left:405px;top:739px;width:3px;height:3px;background:#1a88b4;border-radius:50%;"></div>
<div class="r" style="left:413px;top:739px;width:3px;height:3px;background:#1a88b4;border-radius:50%;"></div>
<div class="t " style="left:420px;top:734px;font-size:12px;line-height:12px;color:#fff;">特锐德：子公司特来电拟通过增资扩股方式引入战投</div>
<div class="t" style="right:935px;top:733px;font-size:13px;line-height:13px;color:#1e8fc6;letter-spacing:0.15px;">2021/1/8</div>
<div class="r" style="left:984px;top:739px;width:3px;height:3px;background:#1a88b4;border-radius:50%;"></div>
<div class="r" style="left:992px;top:739px;width:3px;height:3px;background:#1a88b4;border-radius:50%;"></div>
<div class="t " style="left:999px;top:734px;font-size:12px;line-height:12px;color:#fff;">长源电力:发行股份及支付现金购买资产并募集配套资金暨关联交易报告书(草案)...</div>
<div class="t" style="right:356.5px;top:733px;font-size:13px;line-height:13px;color:#1e8fc6;letter-spacing:0.15px;">2021/1/8</div>
<div class="r" style="left:405px;top:763px;width:3px;height:3px;background:#1a88b4;border-radius:50%;"></div>
<div class="r" style="left:413px;top:763px;width:3px;height:3px;background:#1a88b4;border-radius:50%;"></div>
<div class="t " style="left:420px;top:758px;font-size:12px;line-height:12px;color:#fff;">金财互联：实控人减持0.9979%股份</div>
<div class="t" style="right:935px;top:757px;font-size:13px;line-height:13px;color:#1e8fc6;letter-spacing:0.15px;">2021/1/8</div>
<div class="r" style="left:984px;top:763px;width:3px;height:3px;background:#1a88b4;border-radius:50%;"></div>
<div class="r" style="left:992px;top:763px;width:3px;height:3px;background:#1a88b4;border-radius:50%;"></div>
<div class="t " style="left:999px;top:758px;font-size:12px;line-height:12px;color:#fff;">华维设计:关于公司向不特定合格投资者公开发行股票获得中国证监会核准批复...</div>
<div class="t" style="right:356.5px;top:757px;font-size:13px;line-height:13px;color:#1e8fc6;letter-spacing:0.15px;">2021/1/8</div>
<div class="r" style="left:405px;top:787px;width:3px;height:3px;background:#1a88b4;border-radius:50%;"></div>
<div class="r" style="left:413px;top:787px;width:3px;height:3px;background:#1a88b4;border-radius:50%;"></div>
<div class="t " style="left:420px;top:782px;font-size:12px;line-height:12px;color:#fff;">地球首富换人！能和他一较高下的 或许只有它了</div>
<div class="t" style="right:935px;top:781px;font-size:13px;line-height:13px;color:#1e8fc6;letter-spacing:0.15px;">2021/1/8</div>
<div class="r" style="left:984px;top:787px;width:3px;height:3px;background:#1a88b4;border-radius:50%;"></div>
<div class="r" style="left:992px;top:787px;width:3px;height:3px;background:#1a88b4;border-radius:50%;"></div>
<div class="t " style="left:999px;top:782px;font-size:12px;line-height:12px;color:#fff;">金信诺:关于向特定对象发行A股股票预案披露的提示性公告</div>
<div class="t" style="right:356.5px;top:781px;font-size:13px;line-height:13px;color:#1e8fc6;letter-spacing:0.15px;">2021/1/8</div>
<div class="r" style="left:405px;top:811px;width:3px;height:3px;background:#1a88b4;border-radius:50%;"></div>
<div class="r" style="left:413px;top:811px;width:3px;height:3px;background:#1a88b4;border-radius:50%;"></div>
<div class="t " style="left:420px;top:806px;font-size:12px;line-height:12px;color:#fff;">交易商协会对海通证券等予以警告</div>
<div class="t" style="right:935px;top:805px;font-size:13px;line-height:13px;color:#1e8fc6;letter-spacing:0.15px;">2021/1/8</div>
<div class="r" style="left:984px;top:811px;width:3px;height:3px;background:#1a88b4;border-radius:50%;"></div>
<div class="r" style="left:992px;top:811px;width:3px;height:3px;background:#1a88b4;border-radius:50%;"></div>
<div class="t " style="left:999px;top:806px;font-size:12px;line-height:12px;color:#fff;">星云股份:关于向特定对象发行股票发行情况报告书披露的提示性公告</div>
<div class="t" style="right:356.5px;top:805px;font-size:13px;line-height:13px;color:#1e8fc6;letter-spacing:0.15px;">2021/1/8</div>
<div class="r" style="left:405px;top:835px;width:3px;height:3px;background:#1a88b4;border-radius:50%;"></div>
<div class="r" style="left:413px;top:835px;width:3px;height:3px;background:#1a88b4;border-radius:50%;"></div>
<div class="t " style="left:420px;top:830px;font-size:12px;line-height:12px;color:#fff;">*ST航通：公司拟以股东大会方式主动终止公司股票上市</div>
<div class="t" style="right:935px;top:829px;font-size:13px;line-height:13px;color:#1e8fc6;letter-spacing:0.15px;">2021/1/8</div>
<div class="r" style="left:984px;top:835px;width:3px;height:3px;background:#1a88b4;border-radius:50%;"></div>
<div class="r" style="left:992px;top:835px;width:3px;height:3px;background:#1a88b4;border-radius:50%;"></div>
<div class="t " style="left:999px;top:830px;font-size:12px;line-height:12px;color:#fff;">星云股份:向特定对象发行股票发行情况报告书</div>
<div class="t" style="right:356.5px;top:829px;font-size:13px;line-height:13px;color:#1e8fc6;letter-spacing:0.15px;">2021/1/8</div>
<div class="r" style="left:405px;top:859px;width:3px;height:3px;background:#1a88b4;border-radius:50%;"></div>
<div class="r" style="left:413px;top:859px;width:3px;height:3px;background:#1a88b4;border-radius:50%;"></div>
<div class="t " style="left:420px;top:854px;font-size:12px;line-height:12px;color:#fff;">通达股份：控股股东拟减持不超过5.24%股份</div>
<div class="t" style="right:935px;top:853px;font-size:13px;line-height:13px;color:#1e8fc6;letter-spacing:0.15px;">2021/1/8</div>
<div class="r" style="left:984px;top:859px;width:3px;height:3px;background:#1a88b4;border-radius:50%;"></div>
<div class="r" style="left:992px;top:859px;width:3px;height:3px;background:#1a88b4;border-radius:50%;"></div>
<div class="t " style="left:999px;top:854px;font-size:12px;line-height:12px;color:#fff;">601058:赛轮轮胎关于修订2020年非公开发行股票预案的公告</div>
<div class="t" style="right:356.5px;top:853px;font-size:13px;line-height:13px;color:#1e8fc6;letter-spacing:0.15px;">2021/1/8</div>
<div class="r" style="left:405px;top:883px;width:3px;height:3px;background:#1a88b4;border-radius:50%;"></div>
<div class="r" style="left:413px;top:883px;width:3px;height:3px;background:#1a88b4;border-radius:50%;"></div>
<div class="t " style="left:420px;top:878px;font-size:12px;line-height:12px;color:#fff;">七彩化学：2020年度净利预增59.11%—68.36%</div>
<div class="t" style="right:935px;top:877px;font-size:13px;line-height:13px;color:#1e8fc6;letter-spacing:0.15px;">2021/1/8</div>
<div class="r" style="left:984px;top:883px;width:3px;height:3px;background:#1a88b4;border-radius:50%;"></div>
<div class="r" style="left:992px;top:883px;width:3px;height:3px;background:#1a88b4;border-radius:50%;"></div>
<div class="t " style="left:999px;top:878px;font-size:12px;line-height:12px;color:#fff;">601658:中国邮政储蓄银行股份有限公司关于非公开发行A股股票获中国银保监...</div>
<div class="t" style="right:356.5px;top:877px;font-size:13px;line-height:13px;color:#1e8fc6;letter-spacing:0.15px;">2021/1/8</div>
<div class="r" style="left:1554px;top:445px;width:343px;height:2px;background:#252a35;"></div>
<svg style="left:1655px;top:395px;opacity:0.92" width="230" height="100" viewBox="0 0 230 100">
<defs>
<radialGradient id="eg" cx="0.4" cy="0.35" r="0.75"><stop offset="0" stop-color="#828014"/><stop offset="0.55" stop-color="#7e6c0c"/><stop offset="1" stop-color="#6c4e10"/></radialGradient>
<radialGradient id="eg2" cx="0.5" cy="0.5" r="0.5"><stop offset="0" stop-color="#8c8a18" stop-opacity="0.7"/><stop offset="1" stop-color="#8c8a18" stop-opacity="0"/></radialGradient>
</defs>
<ellipse cx="41.6" cy="48.8" rx="29.6" ry="40.1" fill="url(#eg)"/>
<ellipse cx="52" cy="66" rx="9" ry="12" fill="url(#eg2)"/>
<path d="M12,43 C18,48 26,52 34,51 C42,50 46,45 54,44.5 C62,44 67,46 70,49" fill="none" stroke="#a03838" stroke-width="3" opacity="0.55"/>
<path d="M29.8,12.1 C23,18 19,28 20,37 C21,45 25,49 33,50 C41,51 50,51 55,56 C59,61 59,71 56.7,77.5 C61,71 64,63 62.4,58.9 C61,52 57,49 49,47 C41,45 33,46 29,42 C25,38 24,28 29.8,12.1 Z" fill="#000"/>
<g fill="#8b4716">
<rect x="82.2" y="18.4" width="4.3" height="37.7"/>
<path d="M86.5,38.5 L105.5,18.4 L109.5,18.4 L86.5,42.5 Z"/>
<path d="M90.2,34.5 L93.2,31.5 L109,56.1 L104.8,56.1 Z"/>
<rect x="113.2" y="18.4" width="12" height="3.8"/>
<rect x="120.9" y="18.4" width="4.3" height="37.7"/>
</g>
<g fill="#0b5c0b">
<path d="M137.6,11.2 L136,16 L137,16 L137,19 L133,17 L131.5,14 L133.5,21 L131,23 L144,23 L141.5,21 L143.5,14 L142,17 L138.2,19 L138.2,16 L139.2,16 Z"/>
<path d="M133,29 L141,30.5 L140,35 L143,38 L140.5,41 L140,53 L136,63 L130.5,62 L134.5,52 L134.5,41 Z"/>
</g>
<text transform="translate(143,58) scale(0.78,1.25)" font-family="Liberation Sans" font-size="38" font-weight="bold" fill="#0b5c0b">原</text>
<text transform="translate(174.5,56) scale(0.98,1.25)" font-family="Liberation Sans" font-size="39" font-weight="bold" fill="#8b4716">码</text>
<g font-family="Liberation Sans" font-size="16" fill="#0b5c0b">
<text x="80.5" y="83.5">k</text><text x="108" y="83.5">y</text><text x="130.4" y="83.5">m</text><text x="152.5" y="83.5">.</text><text x="164.5" y="83.5">c</text><text x="180.5" y="83.5">o</text><text x="198.8" y="83.5">m</text>
</g>
</svg>
<div class="r" style="left:1551px;top:97px;width:3px;height:792px;background:#20242e;"></div>
<div class="t " style="left:1574px;top:112px;font-size:12px;line-height:12px;color:#8a8a8a;">姓名</div>
<div class="t " style="left:1722px;top:112px;font-size:12px;line-height:12px;color:#8a8a8a;">价格</div>
<div class="t " style="left:1837.5px;top:112px;font-size:12px;line-height:12px;color:#8a8a8a;">成交量</div>
<div class="t " style="left:1574px;top:142px;font-size:12px;line-height:12px;color:#fff;">卖五</div>
<div class="t " style="left:1722.5px;top:142px;font-size:12px;line-height:12px;color:#cc2a2a;">58.80</div>
<div class="t " style="left:1838px;top:142px;font-size:12px;line-height:12px;color:#cc2a2a;">1212</div>
<div class="t " style="left:1574px;top:170px;font-size:12px;line-height:12px;color:#fff;">卖四</div>
<div class="t " style="left:1722.5px;top:170px;font-size:12px;line-height:12px;color:#cc2a2a;">0.00</div>
<div class="t " style="left:1838px;top:170px;font-size:12px;line-height:12px;color:#cc2a2a;">257</div>
<div class="t " style="left:1574px;top:198px;font-size:12px;line-height:12px;color:#fff;">卖三</div>
<div class="t " style="left:1722.5px;top:198px;font-size:12px;line-height:12px;color:#3cb43c;">0.00</div>
<div class="t " style="left:1838px;top:198px;font-size:12px;line-height:12px;color:#3cb43c;">1000</div>
<div class="t " style="left:1574px;top:226px;font-size:12px;line-height:12px;color:#fff;">卖二</div>
<div class="t " style="left:1722.5px;top:226px;font-size:12px;line-height:12px;color:#cc2a2a;">0.00</div>
<div class="t " style="left:1838px;top:226px;font-size:12px;line-height:12px;color:#cc2a2a;">321</div>
<div class="t " style="left:1574px;top:254px;font-size:12px;line-height:12px;color:#fff;">卖一</div>
<div class="t " style="left:1722.5px;top:254px;font-size:12px;line-height:12px;color:#cc2a2a;">0.00</div>
<div class="t " style="left:1838px;top:254px;font-size:12px;line-height:12px;color:#cc2a2a;">500</div>
<div class="r" style="left:1563px;top:274px;width:340px;height:30px;background:#2a3545;border-radius:3px;"></div>
<div class="t " style="left:1700.5px;top:284px;font-size:12.2px;line-height:12.2px;color:#fff;font-weight:bold;-webkit-text-stroke-width:0;">现价 58.710</div>
<div class="t " style="left:1574px;top:314px;font-size:12px;line-height:12px;color:#fff;">买一</div>
<div class="t " style="left:1722.5px;top:314px;font-size:12px;line-height:12px;color:#cc2a2a;">0.00</div>
<div class="t " style="left:1838px;top:314px;font-size:12px;line-height:12px;color:#cc2a2a;">82</div>
<div class="t " style="left:1574px;top:342px;font-size:12px;line-height:12px;color:#fff;">买二</div>
<div class="t " style="left:1722.5px;top:342px;font-size:12px;line-height:12px;color:#cc2a2a;">0.00</div>
<div class="t " style="left:1838px;top:342px;font-size:12px;line-height:12px;color:#cc2a2a;">360</div>
<div class="t " style="left:1574px;top:370px;font-size:12px;line-height:12px;color:#fff;">买三</div>
<div class="t " style="left:1722.5px;top:370px;font-size:12px;line-height:12px;color:#3cb43c;">0.00</div>
<div class="t " style="left:1838px;top:370px;font-size:12px;line-height:12px;color:#3cb43c;">500</div>
<div class="t " style="left:1574px;top:398px;font-size:12px;line-height:12px;color:#fff;">买四</div>
<div class="t " style="left:1722.5px;top:398px;font-size:12px;line-height:12px;color:#cc2a2a;">0.00</div>
<div class="t " style="left:1838px;top:398px;font-size:12px;line-height:12px;color:#cc2a2a;">804</div>
<div class="t " style="left:1574px;top:426px;font-size:12px;line-height:12px;color:#fff;">买五</div>
<div class="t " style="left:1722.5px;top:426px;font-size:12px;line-height:12px;color:#cc2a2a;">0.00</div>
<div class="t " style="left:1838px;top:426px;font-size:12px;line-height:12px;color:#cc2a2a;">431</div>
<div class="r" style="left:1649px;top:474px;width:40px;height:1px;background:#626262;"></div>
<div class="r" style="left:1772px;top:474px;width:41px;height:1px;background:#626262;"></div>
<div class="t " style="left:1689px;top:468px;font-size:13.5px;line-height:13.5px;color:#e6e6e6;">交易历史记录</div>
<div class="t " style="left:1574px;top:502px;font-size:12px;line-height:12px;color:#e2e2e2;font-weight:bold;-webkit-text-stroke-width:0;">汉嘉设计</div>
<svg style="left:1628px;top:500.5px" width="54" height="15" viewBox="0 0 54 15"><path d="M5 0.5 H51.5 Q53 0.5 53 2 V12.5 Q53 14 51.5 14 H5 L4.5 14.8 L0.3 9.5 L4.5 5 Z" fill="#1e90bf"/></svg>
<div class="t " style="left:1635.5px;top:503px;font-size:12.3px;line-height:12.3px;color:#fff;">300746</div>
<div class="t " style="left:1574px;top:528px;font-size:12px;line-height:12px;color:#6a6a6a;">现价：</div>
<div class="t " style="left:1614px;top:528.5px;font-size:12px;line-height:12px;color:#dd2222;">0</div>
<div class="t " style="left:1812px;top:528px;font-size:12px;line-height:12px;color:#626262;">涨跌幅：</div>
<div class="t " style="left:1864.5px;top:528px;font-size:12px;line-height:12px;color:#dd2222;">买涨</div>
<div class="r" style="left:1574px;top:545px;width:314px;height:1px;background:#2c2c2c;"></div>
<div class="t " style="left:1574px;top:557px;font-size:12px;line-height:12px;color:#e2e2e2;font-weight:bold;-webkit-text-stroke-width:0;">澜起科技</div>
<svg style="left:1628px;top:555.5px" width="54" height="15" viewBox="0 0 54 15"><path d="M5 0.5 H51.5 Q53 0.5 53 2 V12.5 Q53 14 51.5 14 H5 L4.5 14.8 L0.3 9.5 L4.5 5 Z" fill="#1e90bf"/></svg>
<div class="t " style="left:1635.5px;top:558px;font-size:12.3px;line-height:12.3px;color:#fff;">688008</div>
<div class="t " style="left:1574px;top:583px;font-size:12px;line-height:12px;color:#6a6a6a;">现价：</div>
<div class="t " style="left:1614px;top:583.5px;font-size:12px;line-height:12px;color:#dd2222;">0</div>
<div class="t " style="left:1812px;top:583px;font-size:12px;line-height:12px;color:#626262;">涨跌幅：</div>
<div class="t " style="left:1864.5px;top:583px;font-size:12px;line-height:12px;color:#dd2222;">买涨</div>
<div class="r" style="left:1574px;top:600px;width:314px;height:1px;background:#2c2c2c;"></div>
<div class="t " style="left:1574px;top:612px;font-size:12px;line-height:12px;color:#e2e2e2;font-weight:bold;-webkit-text-stroke-width:0;">睿创微纳</div>
<svg style="left:1628px;top:610.5px" width="54" height="15" viewBox="0 0 54 15"><path d="M5 0.5 H51.5 Q53 0.5 53 2 V12.5 Q53 14 51.5 14 H5 L4.5 14.8 L0.3 9.5 L4.5 5 Z" fill="#1e90bf"/></svg>
<div class="t " style="left:1635.5px;top:613px;font-size:12.3px;line-height:12.3px;color:#fff;">688002</div>
<div class="t " style="left:1574px;top:638px;font-size:12px;line-height:12px;color:#6a6a6a;">现价：</div>
<div class="t " style="left:1614px;top:638.5px;font-size:12px;line-height:12px;color:#dd2222;">0</div>
<div class="t " style="left:1812px;top:638px;font-size:12px;line-height:12px;color:#626262;">涨跌幅：</div>
<div class="t " style="left:1864.5px;top:638px;font-size:12px;line-height:12px;color:#dd2222;">买涨</div>
<div class="r" style="left:1574px;top:655px;width:314px;height:1px;background:#2c2c2c;"></div>
<div class="t " style="left:1574px;top:667px;font-size:12px;line-height:12px;color:#e2e2e2;font-weight:bold;-webkit-text-stroke-width:0;">登海种业</div>
<svg style="left:1628px;top:665.5px" width="54" height="15" viewBox="0 0 54 15"><path d="M5 0.5 H51.5 Q53 0.5 53 2 V12.5 Q53 14 51.5 14 H5 L4.5 14.8 L0.3 9.5 L4.5 5 Z" fill="#1e90bf"/></svg>
<div class="t " style="left:1635.5px;top:668px;font-size:12.3px;line-height:12.3px;color:#fff;">002041</div>
<div class="t " style="left:1574px;top:693px;font-size:12px;line-height:12px;color:#6a6a6a;">现价：</div>
<div class="t " style="left:1614px;top:693.5px;font-size:12px;line-height:12px;color:#dd2222;">0</div>
<div class="t " style="left:1812px;top:693px;font-size:12px;line-height:12px;color:#626262;">涨跌幅：</div>
<div class="t " style="left:1864.5px;top:693px;font-size:12px;line-height:12px;color:#dd2222;">买跌</div>
<div class="r" style="left:1574px;top:710px;width:314px;height:1px;background:#2c2c2c;"></div>
<div class="t " style="left:1574px;top:722px;font-size:12px;line-height:12px;color:#e2e2e2;font-weight:bold;-webkit-text-stroke-width:0;">劲拓股份</div>
<svg style="left:1628px;top:720.5px" width="54" height="15" viewBox="0 0 54 15"><path d="M5 0.5 H51.5 Q53 0.5 53 2 V12.5 Q53 14 51.5 14 H5 L4.5 14.8 L0.3 9.5 L4.5 5 Z" fill="#1e90bf"/></svg>
<div class="t " style="left:1635.5px;top:723px;font-size:12.3px;line-height:12.3px;color:#fff;">300400</div>
<div class="t " style="left:1574px;top:748px;font-size:12px;line-height:12px;color:#6a6a6a;">现价：</div>
<div class="t " style="left:1614px;top:748.5px;font-size:12px;line-height:12px;color:#dd2222;">0</div>
<div class="t " style="left:1812px;top:748px;font-size:12px;line-height:12px;color:#626262;">涨跌幅：</div>
<div class="t " style="left:1864.5px;top:748px;font-size:12px;line-height:12px;color:#dd2222;">买涨</div>
<div class="r" style="left:1574px;top:765px;width:314px;height:1px;background:#2c2c2c;"></div>
<div class="t " style="left:1574px;top:777px;font-size:12px;line-height:12px;color:#e2e2e2;font-weight:bold;-webkit-text-stroke-width:0;">青海华鼎</div>
<svg style="left:1628px;top:775.5px" width="54" height="15" viewBox="0 0 54 15"><path d="M5 0.5 H51.5 Q53 0.5 53 2 V12.5 Q53 14 51.5 14 H5 L4.5 14.8 L0.3 9.5 L4.5 5 Z" fill="#1e90bf"/></svg>
<div class="t " style="left:1635.5px;top:778px;font-size:12.3px;line-height:12.3px;color:#fff;">600243</div>
<div class="t " style="left:1574px;top:803px;font-size:12px;line-height:12px;color:#6a6a6a;">现价：</div>
<div class="t " style="left:1614px;top:803.5px;font-size:12px;line-height:12px;color:#dd2222;">0</div>
<div class="t " style="left:1812px;top:803px;font-size:12px;line-height:12px;color:#626262;">涨跌幅：</div>
<div class="t " style="left:1864.5px;top:803px;font-size:12px;line-height:12px;color:#dd2222;">买涨</div>
<div class="r" style="left:1574px;top:820px;width:314px;height:1px;background:#2c2c2c;"></div>
<div class="t " style="left:1574px;top:832px;font-size:12px;line-height:12px;color:#e2e2e2;font-weight:bold;-webkit-text-stroke-width:0;">乐鑫科技</div>
<svg style="left:1628px;top:830.5px" width="54" height="15" viewBox="0 0 54 15"><path d="M5 0.5 H51.5 Q53 0.5 53 2 V12.5 Q53 14 51.5 14 H5 L4.5 14.8 L0.3 9.5 L4.5 5 Z" fill="#1e90bf"/></svg>
<div class="t " style="left:1635.5px;top:833px;font-size:12.3px;line-height:12.3px;color:#fff;">688018</div>
<div class="t " style="left:1574px;top:858px;font-size:12px;line-height:12px;color:#6a6a6a;">现价：</div>
<div class="t " style="left:1614px;top:858.5px;font-size:12px;line-height:12px;color:#dd2222;">0</div>
<div class="t " style="left:1812px;top:858px;font-size:12px;line-height:12px;color:#626262;">涨跌幅：</div>
<div class="t " style="left:1864.5px;top:858px;font-size:12px;line-height:12px;color:#dd2222;">买涨</div>
<div class="r" style="left:1574px;top:875px;width:314px;height:1px;background:#2c2c2c;"></div>
<div class="t " style="left:1574px;top:887px;font-size:12px;line-height:12px;color:#e2e2e2;font-weight:bold;-webkit-text-stroke-width:0;">芯海科技</div>
<svg style="left:1628px;top:885.5px" width="54" height="15" viewBox="0 0 54 15"><path d="M5 0.5 H51.5 Q53 0.5 53 2 V12.5 Q53 14 51.5 14 H5 L4.5 14.8 L0.3 9.5 L4.5 5 Z" fill="#1e90bf"/></svg>
<div class="t " style="left:1635.5px;top:888px;font-size:12.3px;line-height:12.3px;color:#fff;">688595</div>
<div class="t " style="left:1574px;top:913px;font-size:12px;line-height:12px;color:#6a6a6a;">现价：</div>
<div class="t " style="left:1614px;top:913.5px;font-size:12px;line-height:12px;color:#dd2222;">0</div>
<div class="t " style="left:1812px;top:913px;font-size:12px;line-height:12px;color:#626262;">涨跌幅：</div>
<div class="t " style="left:1864.5px;top:913px;font-size:12px;line-height:12px;color:#dd2222;">买涨</div>
<div class="r" style="left:1574px;top:930px;width:314px;height:1px;background:#2c2c2c;"></div>
</body></html>
